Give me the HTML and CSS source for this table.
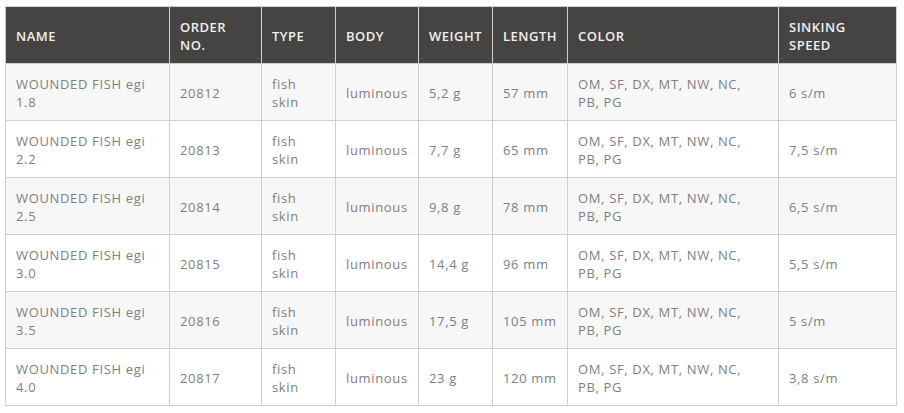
FILE: index.html
```html
<!DOCTYPE html>
<html>
<head>
<meta charset="utf-8">
<link rel="stylesheet" href="styles.css">
</head>
<body>
<div class="wrap">
<table class="specs">
<colgroup>
<col class="c-name"><col class="c-order"><col class="c-type"><col class="c-body"><col class="c-weight"><col class="c-length"><col class="c-color"><col class="c-speed">
</colgroup>
<thead>
<tr><th>NAME</th><th>ORDER NO.</th><th>TYPE</th><th>BODY</th><th>WEIGHT</th><th>LENGTH</th><th class="color">COLOR</th><th>SINKING SPEED</th></tr>
</thead>
<tbody>
<tr><td>WOUNDED FISH egi 1.8</td><td>20812</td><td>fish skin</td><td>luminous</td><td>5,2 g</td><td>57 mm</td><td class="color">OM, SF, DX, MT, NW, NC, PB, PG</td><td>6 s/m</td></tr>
<tr><td>WOUNDED FISH egi 2.2</td><td>20813</td><td>fish skin</td><td>luminous</td><td>7,7 g</td><td>65 mm</td><td class="color">OM, SF, DX, MT, NW, NC, PB, PG</td><td>7,5 s/m</td></tr>
<tr><td>WOUNDED FISH egi 2.5</td><td>20814</td><td>fish skin</td><td>luminous</td><td>9,8 g</td><td>78 mm</td><td class="color">OM, SF, DX, MT, NW, NC, PB, PG</td><td>6,5 s/m</td></tr>
<tr><td>WOUNDED FISH egi 3.0</td><td>20815</td><td>fish skin</td><td>luminous</td><td>14,4 g</td><td>96 mm</td><td class="color">OM, SF, DX, MT, NW, NC, PB, PG</td><td>5,5 s/m</td></tr>
<tr><td>WOUNDED FISH egi 3.5</td><td>20816</td><td>fish skin</td><td>luminous</td><td>17,5 g</td><td>105 mm</td><td class="color">OM, SF, DX, MT, NW, NC, PB, PG</td><td>5 s/m</td></tr>
<tr><td>WOUNDED FISH egi 4.0</td><td>20817</td><td>fish skin</td><td>luminous</td><td>23 g</td><td>120 mm</td><td class="color">OM, SF, DX, MT, NW, NC, PB, PG</td><td>3,8 s/m</td></tr>
</tbody>
</table>
</div>
</body>
</html>
```
FILE: styles.css
```css
html, body { margin: 0; padding: 0; background: #fff; }
.wrap { padding: 6px 0 0 5px; }
.specs {
  border-collapse: collapse;
  table-layout: fixed;
  width: 891px;
  font-family: "Open Sans", sans-serif;
  font-size: 13px;
  line-height: 18px;
  letter-spacing: 0.65px;
}
.c-name { width: 164px; }
.c-order { width: 92px; }
.c-type { width: 74px; }
.c-body { width: 83px; }
.c-weight { width: 74px; }
.c-length { width: 75px; }
.c-color { width: 211px; }
.c-speed { width: 118px; }
.specs th, .specs td {
  border: 1px solid #cfcfcf;
  padding: 10px 10px;
  text-align: left;
  vertical-align: middle;
}
.specs th {
  background: #454443;
  color: #f0f0f0;
  font-weight: 600;
  height: 36px;
  padding-top: 11px;
  padding-bottom: 9px;
  letter-spacing: 0.5px;
}
.specs td {
  color: #808080;
  font-weight: 400;
  height: 36px;
  padding-top: 11px;
  padding-bottom: 9px;
}
.specs td.color { padding-right: 14px; }
.specs tbody tr:nth-child(odd) td { background: #f7f7f7; }
.specs tbody tr:nth-child(even) td { background: #fff; }
```
